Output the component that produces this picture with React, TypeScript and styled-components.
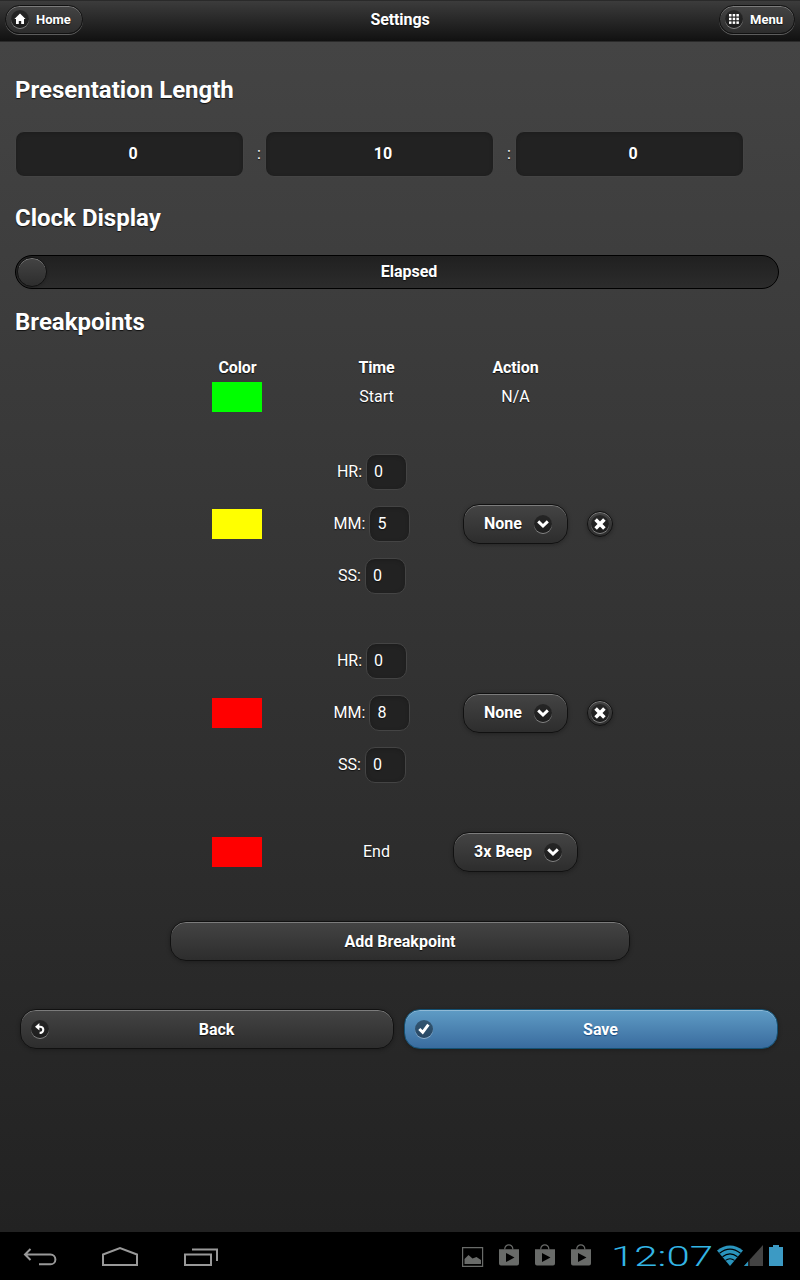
import React from "react";
import styled, { createGlobalStyle, css } from "styled-components";

const Global = createGlobalStyle`
  * { box-sizing: border-box; }
  body { margin: 0; background: #000; font-family: Roboto, "Liberation Sans", sans-serif; font-size: 16px; color: #fff; }
  button, input { font: inherit; color: inherit; margin: 0; }
`;

const Screen = styled.div`
  display: flex;
  flex-direction: column;
  width: 800px;
  height: 1280px;
  text-shadow: 0 1px 1px #111;
`;

const Header = styled.header`
  flex: none;
  display: grid;
  grid-template-columns: 200px 1fr 200px;
  height: 42px;
  padding: 4px 5px 0;
  border-top: 1px solid #2a2a2a;
  border-bottom: 1px solid #2a2a2a;
  background: linear-gradient(#3c3c3c, #111);
`;

const Title = styled.h1`
  margin: 0;
  font-size: 16px;
  line-height: 30px;
  font-weight: 700;
  text-align: center;
  letter-spacing: -0.1px;
`;

const Disc = styled.span`
  flex: none;
  display: grid;
  place-items: center;
  width: 18px;
  height: 18px;
  border-radius: 50%;
  background: rgba(0, 0, 0, 0.4);
  box-shadow: 0 1px 0 rgba(255, 255, 255, 0.4);
  svg { display: block; }
`;

const HeaderButton = styled.button<{ $end?: boolean }>`
  display: flex;
  align-items: center;
  gap: 7px;
  justify-self: ${(p) => (p.$end ? "end" : "start")};
  width: ${(p) => (p.$end ? 76 : 78)}px;
  height: 29px;
  padding: 0 0 0 5px;
  border: 1px solid #111;
  border-radius: 15px;
  background: linear-gradient(#444, #2d2d2d);
  box-shadow: inset 0 1px 0 rgba(255, 255, 255, 0.3), 0 1px 0 rgba(255, 255, 255, 0.3);
  text-shadow: 0 1px 1px #111;
  font-size: 13px;
  font-weight: 700;
  ${Disc} { margin-bottom: 1px; }
`;

const Content = styled.main`
  flex: 1;
  display: flex;
  flex-direction: column;
  padding: 33px 15px 0;
  background: linear-gradient(#444, #222);
`;

const Heading = styled.h2<{ $top?: number }>`
  margin: ${(p) => p.$top ?? 0}px 0 0;
  height: 30px;
  font-size: 24px;
  line-height: 30px;
  font-weight: 700;
`;

const Length = styled.div`
  display: flex;
  align-items: center;
  margin: 26px 0 0;
`;

const LengthInput = styled.div`
  width: 229px;
  height: 46px;
  padding-left: 7px;
  border: 1px solid #444;
  border-radius: 9px;
  background: #222;
  box-shadow: inset 0 1px 4px rgba(0, 0, 0, 0.2);
  text-align: center;
  font-weight: 700;
  line-height: 43px;
`;

const Colon = styled.span`
  width: 21px;
  padding: 0 0 2px 9px;
  text-align: center;
`;

const Slider = styled.div`
  display: flex;
  align-items: center;
  width: 764px;
  height: 34px;
  margin-top: 22px;
  padding-left: 1px;
  border: 1px solid #000;
  border-radius: 17px;
  background: linear-gradient(#202020, #2c2c2c);
`;

const Knob = styled.span`
  width: 30px;
  height: 30px;
  border: 1px solid #111;
  border-radius: 50%;
  background: linear-gradient(#444, #2d2d2d);
  box-shadow: inset 0 1px 0 rgba(255, 255, 255, 0.3), 0 1px 3px rgba(0, 0, 0, 0.2);
`;

const SliderLabel = styled.span`
  flex: 1;
  padding-right: 7px;
  text-align: center;
  font-weight: 700;
  line-height: 32px;
`;

const Table = styled.section`
  display: flex;
  flex-direction: column;
  margin: 19px 0 0 152.5px;
`;

const Row = styled.div<{ $height: number; $top?: number }>`
  display: grid;
  grid-template-columns: 139px 139px 139px 31px;
  align-items: center;
  justify-items: center;
  height: ${(p) => p.$height}px;
  margin-top: ${(p) => p.$top ?? 0}px;
  line-height: 22px;
`;

const ColumnName = styled.strong`
  padding: 1px 0 0 1px;
  letter-spacing: -0.1px;
`;

const Cell = styled.span`
  padding-left: 1px;
`;

const Swatch = styled.span<{ $color: string }>`
  width: 50px;
  height: 30px;
  background: ${(p) => p.$color};
`;

const Fields = styled.div`
  display: flex;
  flex-direction: column;
  align-items: center;
  gap: 16px;
  padding-right: 8px;
`;

const Field = styled.label`
  display: flex;
  align-items: center;
  gap: 4px;
  height: 36px;
`;

const FieldValue = styled.span`
  width: 41px;
  height: 36px;
  padding-left: 7px;
  border: 1px solid #444;
  border-radius: 10px;
  background: #222;
  box-shadow: inset 0 1px 4px rgba(0, 0, 0, 0.2);
  line-height: 34px;
`;

const blue = css`
  border-color: #145072;
  background: linear-gradient(#5f9cc5, #396b9e);
  text-shadow: 0 1px 1px #194b7e;
`;

const Button = styled.button<{ $width: number; $inset?: number; $primary?: boolean }>`
  position: relative;
  display: flex;
  align-items: center;
  justify-content: center;
  gap: 12px;
  width: ${(p) => p.$width}px;
  height: 40px;
  padding: 0 0 0 ${(p) => p.$inset ?? 0}px;
  border: 1px solid #111;
  border-radius: 16px;
  background: linear-gradient(#444, #2d2d2d);
  box-shadow: inset 0 1px 0 rgba(255, 255, 255, 0.3), 0 1px 4px rgba(0, 0, 0, 0.3);
  text-shadow: 0 1px 1px #111;
  font-weight: 700;
  ${(p) => p.$primary && blue}
`;

const SelectButton = styled(Button)`
  padding: 1px 0 0 6px;
`;

const StartIcon = styled.span`
  position: absolute;
  left: 10px;
  top: 10px;
`;

const Remove = styled.button`
  display: grid;
  place-items: center;
  width: 26px;
  height: 26px;
  padding: 0;
  border: 1px solid #111;
  border-radius: 50%;
  background: linear-gradient(#444, #2d2d2d);
  box-shadow: inset 0 1px 0 rgba(255, 255, 255, 0.3), 0 1px 4px rgba(0, 0, 0, 0.3);
`;

const AddRow = styled.div`
  display: flex;
  margin: 25px 0 0 155px;
`;

const Actions = styled.div`
  display: flex;
  gap: 10px;
  margin: 48px 0 0 5px;
`;

const SystemBar = styled.footer`
  flex: none;
  display: flex;
  justify-content: space-between;
  height: 48px;
  background: #000;
  text-shadow: none;
`;

const NavKeys = styled.div`
  display: flex;
  gap: 36px;
  padding: 12px 0 0 18px;
`;

const Status = styled.div`
  display: flex;
  align-items: flex-start;
  padding: 12px 15px 0 0;
`;

const Notices = styled.div`
  display: flex;
  gap: 12px;
  margin-right: 18px;
`;

const Clock = styled.span`
  width: 104px;
  height: 28px;
  color: #33b5e5;
  font-size: 28px;
  line-height: 25px;
  font-weight: 300;
  white-space: nowrap;
  span { display: inline-block; transform: scaleX(1.5); transform-origin: 0 0; }
`;

const HomeIcon = () => (
  <svg width="12" height="12" viewBox="0 0 12 12" fill="#fff"><path d="M6 .6 11.6 6H10v5H7.2V8H4.8v3H2V6H.4z" /></svg>
);
const GridIcon = () => (
  <svg width="10" height="10" viewBox="0 0 10 10" fill="#fff">
    {[0, 3.7, 7.4].flatMap((y) => [0, 3.7, 7.4].map((x) => <rect key={`${x}-${y}`} x={x} y={y} width="2.5" height="2.5" />))}
  </svg>
);
const Chevron = () => (
  <svg width="12" height="12" viewBox="0 0 12 12" fill="none" stroke="#fff" strokeWidth="3"><path d="M1.2 3.4 6 8l4.8-4.6" /></svg>
);
const Cross = () => (
  <svg width="12" height="12" viewBox="0 0 12 12" fill="none" stroke="#fff" strokeWidth="3.6"><path d="m1.6 1.6 8.8 8.8M10.4 1.6 1.6 10.4" /></svg>
);
const Undo = () => (
  <svg width="12" height="12" viewBox="0 0 12 12"><path d="M1 3.7 5.4 0v7.4z" fill="#fff" /><path d="M4 3.7h2.2a3.1 3.1 0 0 1 0 6.2H5.6" fill="none" stroke="#fff" strokeWidth="2.1" /></svg>
);
const Check = () => (
  <svg width="12" height="12" viewBox="0 0 12 12" fill="none" stroke="#fff" strokeWidth="2.9"><path d="m1.3 6 3.4 3.4L10.4 1.6" /></svg>
);

const BagIcon = () => (
  <svg width="24" height="24" viewBox="0 0 24 24">
    <path d="M7.8 5.5V4.8a4 4 0 0 1 8 0v.7" fill="none" stroke="#696b69" strokeWidth="1.2" />
    <path d="M2 5.2h20v14.2q0 2-2 2H4q-2 0-2-2zM9 9v9l8.5-4.5z" fill="#696b69" fillRule="evenodd" />
  </svg>
);

const breakpoints = [
  { color: "#ff0", minutes: 5, top: 13 },
  { color: "#f00", minutes: 8, top: 0 },
];

export default function App() {
  return (
    <Screen>
      <Global />
      <Header>
        <HeaderButton><Disc><HomeIcon /></Disc>Home</HeaderButton>
        <Title>Settings</Title>
        <HeaderButton $end><Disc><GridIcon /></Disc>Menu</HeaderButton>
      </Header>
      <Content>
        <Heading>Presentation Length</Heading>
        <Length>
          <LengthInput>0</LengthInput><Colon>:</Colon>
          <LengthInput>10</LengthInput><Colon>:</Colon>
          <LengthInput>0</LengthInput>
        </Length>
        <Heading $top={26}>Clock Display</Heading>
        <Slider><Knob /><SliderLabel>Elapsed</SliderLabel></Slider>
        <Heading $top={18}>Breakpoints</Heading>
        <Table>
          <Row $height={22}>
            <ColumnName>Color</ColumnName><ColumnName>Time</ColumnName><ColumnName>Action</ColumnName>
          </Row>
          <Row $height={38}>
            <Swatch $color="#0f0" /><Cell>Start</Cell><Cell>N/A</Cell>
          </Row>
          {breakpoints.map((b) => (
            <Row $height={189} $top={b.top} key={b.color}>
              <Swatch $color={b.color} />
              <Fields>
                <Field>HR:<FieldValue>0</FieldValue></Field>
                <Field>MM:<FieldValue>{b.minutes}</FieldValue></Field>
                <Field>SS:<FieldValue>0</FieldValue></Field>
              </Fields>
              <SelectButton $width={105}>None<Disc><Chevron /></Disc></SelectButton>
              <Remove><Disc><Cross /></Disc></Remove>
            </Row>
          ))}
          <Row $height={89}>
            <Swatch $color="#f00" /><Cell>End</Cell>
            <SelectButton $width={125}>3x Beep<Disc><Chevron /></Disc></SelectButton>
          </Row>
        </Table>
        <AddRow><Button $width={460}>Add Breakpoint</Button></AddRow>
        <Actions>
          <Button $width={374} $inset={19}><StartIcon><Disc><Undo /></Disc></StartIcon>Back</Button>
          <Button $width={374} $inset={19} $primary><StartIcon><Disc><Check /></Disc></StartIcon>Save</Button>
        </Actions>
      </Content>
      <SystemBar>
        <NavKeys>
          <svg width="44" height="26" fill="none" stroke="#999" strokeWidth="2"><path d="M12.5 5 7 10.5l5.5 5.5M7 10.5h25.5a4.9 4.9 0 0 1 0 9.8H21" /></svg>
          <svg width="44" height="26" fill="none" stroke="#999" strokeWidth="2"><path d="M5 21V10.5L22 4l17 6.5V21z" /></svg>
          <svg width="44" height="26" fill="none" stroke="#999" strokeWidth="2"><path d="M7 10.5h26V21H7zM14 5.5h25V17" /></svg>
        </NavKeys>
        <Status>
          <Notices>
            <svg width="24" height="24" viewBox="0 0 24 24"><path d="M1.6 3.6h20v18.8h-20z" fill="none" stroke="#696b69" strokeWidth="1.2" /><path d="M3.5 20v-5l4-4 4 3.5 4-1.5 4.5 3v4z" fill="#696b69" /></svg>
            <BagIcon /><BagIcon /><BagIcon />
          </Notices>
          <Clock><span>12:07</span></Clock>
          <svg width="70" height="28" viewBox="0 0 70 28">
            <path d="M15 22 2 6.5Q15-3.5 28 6.5z" fill="#2a94bd" />
            <path d="M4.5 9.2Q15 1 25.5 9.2M7.5 12.8Q15 7 22.5 12.8M10.5 16.4Q15 13 19.5 16.4" fill="none" stroke="#000" strokeWidth="1.1" />
            <path d="M29 22 48 1v21z" fill="#434343" /><path d="M29 22l4-4.4V22z" fill="#2a94bd" /><path d="M34 16v6" stroke="#000" />
            <path d="M54 3h4V1h6v2h4v19H54z" fill="#3c9ac4" />
          </svg>
        </Status>
      </SystemBar>
    </Screen>
  );
}
